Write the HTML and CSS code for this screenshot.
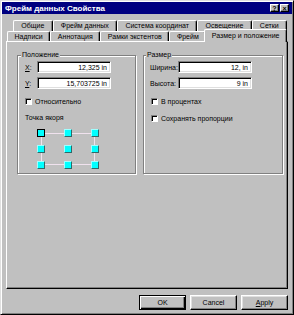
FILE: index.html
```html
<!DOCTYPE html>
<html lang="ru">
<head>
    <meta charset="UTF-8">
    <meta name="viewport" content="width=device-width, initial-scale=1.0">
    <title>Фрейм данных Свойства</title>
    <link rel="stylesheet" href="styles.css">
</head>
<body>
    <div class="window">
        <div class="titlebar">
            <span class="title">Фрейм данных Свойства</span>
            <div class="title-btns">
                <button class="title-btn">?</button>
                <button class="title-btn">×</button>
            </div>
        </div>

        <div class="tabs">
            <div class="tab-row back">
                <div class="tab">Общие</div>
                <div class="tab">Фрейм данных</div>
                <div class="tab">Система координат</div>
                <div class="tab">Освещение</div>
                <div class="tab">Сетки</div>
            </div>
            <div class="tab-row front">
                <div class="tab">Надписи</div>
                <div class="tab">Аннотация</div>
                <div class="tab">Рамки экстентов</div>
                <div class="tab">Фрейм</div>
                <div class="tab active">Размер и положение</div>
            </div>
        </div>

        <div class="panel">
            <div class="groups">
                <fieldset class="group pos">
                    <legend>Положение</legend>
                    <div class="field">
                        <label class="field-label"><u>X</u>:</label>
                        <input class="text-input" type="text" value="12,325 in">
                    </div>
                    <div class="field second">
                        <label class="field-label"><u>Y</u>:</label>
                        <input class="text-input" type="text" value="15,703725 in">
                    </div>
                    <div class="check-row first">
                        <span class="check"></span>
                        <span class="check-label">Относительно</span>
                    </div>
                    <div class="anchor-title">Точка якоря</div>
                    <div class="anchor">
                        <span class="pt selected"></span>
                        <span class="pt"></span>
                        <span class="pt"></span>
                        <span class="pt"></span>
                        <span class="pt"></span>
                        <span class="pt"></span>
                        <span class="pt"></span>
                        <span class="pt"></span>
                        <span class="pt"></span>
                    </div>
                </fieldset>

                <fieldset class="group size">
                    <legend>Размер</legend>
                    <div class="field">
                        <label class="field-label">Ширина:</label>
                        <input class="text-input" type="text" value="12, in">
                    </div>
                    <div class="field second">
                        <label class="field-label">Высота:</label>
                        <input class="text-input" type="text" value="9 in">
                    </div>
                    <div class="check-row first">
                        <span class="check"></span>
                        <span class="check-label">В процентах</span>
                    </div>
                    <div class="check-row next">
                        <span class="check"></span>
                        <span class="check-label">Сохранять пропорции</span>
                    </div>
                </fieldset>
            </div>
        </div>

        <div class="footer">
            <button class="btn default">OK</button>
            <button class="btn">Cancel</button>
            <button class="btn"><u>A</u>pply</button>
        </div>
    </div>
</body>
</html>
```

FILE: styles.css
```css
body {
    margin: 0;
    background: #c0c0c0;
    font-family: "Liberation Sans", Arial, sans-serif;
    font-size: 7px;
    color: #000;
}

.window {
    width: 294px;
    height: 315px;
    box-sizing: border-box;
    border: 1px solid;
    border-color: #dfdfdf #000 #000 #dfdfdf;
    box-shadow: inset 1px 1px #fff, inset -1px -1px #808080;
    padding: 1px;
    display: flex;
    flex-direction: column;
}

/* заголовок окна */
.titlebar {
    height: 12px;
    flex: none;
    background: #000080;
    color: #fff;
    display: flex;
    align-items: center;
    justify-content: space-between;
    padding: 0 3px 0 3px;
}

.title {
    font-weight: bold;
    font-size: 8px;
}

.title-btns {
    display: flex;
    gap: 1px;
}

.title-btn {
    width: 9px;
    height: 8px;
    box-sizing: border-box;
    padding: 0;
    background: #c0c0c0;
    border: 1px solid;
    border-color: #fff #000 #000 #fff;
    box-shadow: inset -1px -1px #808080;
    font-family: inherit;
    font-size: 7px;
    font-weight: bold;
    line-height: 5px;
    color: #000;
}

/* вкладки */
.tabs {
    margin: 6px 4px 0;
    flex: none;
}

.tab-row {
    display: flex;
}

.tab-row.back {
    height: 11px;
    padding: 0 1px 0 7px;
}

.tab-row.front {
    height: 10px;
    padding: 0 3px 0 1px;
}

.tab {
    flex: 1 0 auto;
    box-sizing: border-box;
    padding: 0 4px;
    border: 1px solid;
    border-color: #fff #000 transparent #fff;
    border-bottom: 0;
    border-radius: 2px 2px 0 0;
    box-shadow: inset -1px 0 #808080;
    text-align: center;
    line-height: 9px;
    white-space: nowrap;
    background: #c0c0c0;
}

.tab.active {
    position: relative;
    z-index: 1;
    height: 13px;
    margin: -2px -2px -1px;
    line-height: 11px;
}

/* рабочая область */
.panel {
    flex: 1;
    margin: 0 4px;
    border: 1px solid;
    border-color: #fff #000 #000 #fff;
    box-shadow: inset -1px -1px #808080;
    padding: 9px 4px 0 10px;
}

.groups {
    display: grid;
    grid-template-columns: 119px 1fr;
    column-gap: 7px;
}

.group {
    margin: 0;
    min-width: 0;
    border: 1px solid #808080;
    box-shadow: inset 1px 1px #fff, 1px 1px #fff;
    padding: 0 6px 4px 7px;
}

.group legend {
    padding: 0 1px;
    margin-left: -4px;
    line-height: 8px;
    background: #c0c0c0;
}

.group.size {
    padding-left: 6px;
}

.field {
    display: flex;
    align-items: center;
    height: 12px;
    margin-top: 2px;
}

.field.second {
    margin-top: 4px;
}

.field-label {
    width: 12px;
    flex: none;
}

.size .field-label {
    width: 28px;
}

.text-input {
    width: 74px;
    height: 12px;
    box-sizing: border-box;
    border: 1px solid;
    border-color: #808080 #fff #fff #808080;
    box-shadow: inset 1px 1px #000, inset -1px -1px #dfdfdf;
    background: #fff;
    padding: 0 3px;
    margin: 0;
    font-family: inherit;
    font-size: 7px;
    text-align: right;
    outline: none;
}

.check-row {
    display: flex;
    align-items: center;
    height: 7px;
}

.check-row.first {
    margin-top: 9px;
}

.check-row.next {
    margin-top: 10px;
}

.size .check-row {
    padding-left: 1px;
}

.check {
    width: 7px;
    height: 7px;
    box-sizing: border-box;
    flex: none;
    background: #fff;
    border: 1px solid;
    border-color: #808080 #fff #fff #808080;
    box-shadow: inset 1px 1px #000;
}

.check-label {
    margin-left: 3px;
    white-space: nowrap;
}

.anchor-title {
    margin-top: 9px;
    line-height: 8px;
}

/* точки привязки */
.anchor {
    position: relative;
    display: grid;
    grid-template-columns: repeat(3, 8px);
    grid-auto-rows: 8px;
    column-gap: 19px;
    row-gap: 8px;
    width: fit-content;
    margin: 7px 0 0 12px;
}

.anchor::before {
    content: "";
    position: absolute;
    left: 4px;
    top: 4px;
    right: 4px;
    bottom: 4px;
    border: 1px solid #f0e2ee;
}

.pt {
    position: relative;
    box-sizing: border-box;
    background: #00ffff;
    border: 1px solid;
    border-color: #a0ffff #306868 #306868 #a0ffff;
}

.pt.selected {
    border-color: #000;
}

/* кнопки */
.footer {
    flex: none;
    display: flex;
    justify-content: flex-end;
    gap: 4px;
    height: 15px;
    margin: 6px 4px 3px;
}

.btn {
    width: 47px;
    height: 15px;
    box-sizing: border-box;
    padding: 0;
    background: #c0c0c0;
    border: 1px solid;
    border-color: #fff #000 #000 #fff;
    box-shadow: inset -1px -1px #808080, inset 1px 1px #dfdfdf;
    font-family: inherit;
    font-size: 7px;
    color: #000;
}

.btn.default {
    border-color: #000;
    box-shadow: inset 1px 1px #fff, inset -1px -1px #000, inset -2px -2px #808080;
}
```
